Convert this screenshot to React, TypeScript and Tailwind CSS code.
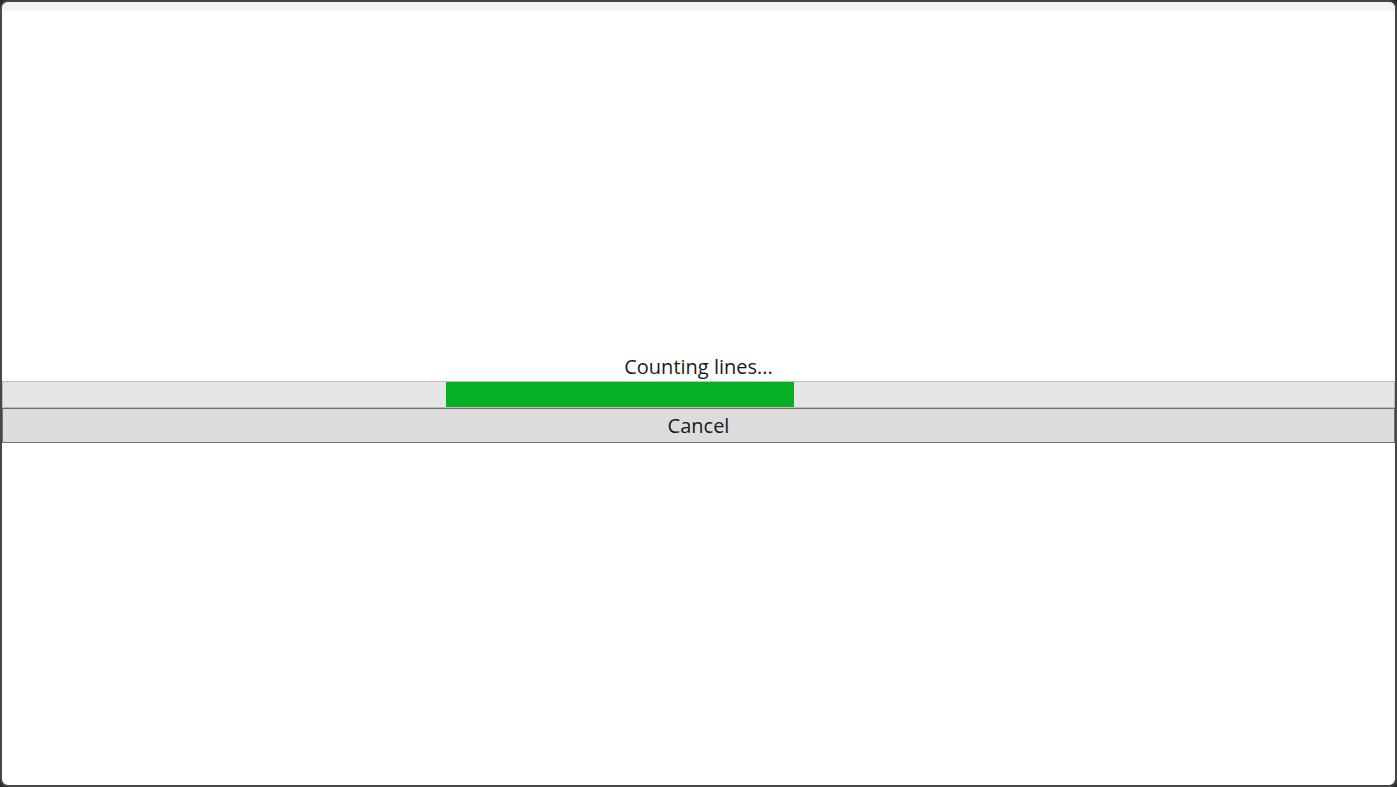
export default function App() {
  const progress = 25;
  return (
    <div className="h-[787px] w-[1397px] bg-[#2a2a2a]">
      <div className="flex h-full w-full flex-col overflow-hidden rounded-[8px] border-2 border-[#474747] bg-white font-['Open_Sans',sans-serif] text-[#1a1a1a]">
        <div className="h-[9px] shrink-0 bg-[#f3f3f3]" />
        <div className="flex flex-1 flex-col justify-center pt-[1px]">
          <div className="h-[27px] text-center text-[20px] leading-[26px]">Counting lines...</div>
          <div className="h-[27px] border border-[#bcbcbc] bg-[#e6e6e6]">
            <div className="flex h-full">
              <div className="w-[443px]" />
              <div className="h-full bg-[#06b025]" style={{ width: `${progress}%` }} />
            </div>
          </div>
          <button className="h-[35px] w-full border border-[#707070] bg-[#dddddd] text-center text-[20px] leading-[32px] text-[#1a1a1a]">
            Cancel
          </button>
        </div>
      </div>
    </div>
  );
}
